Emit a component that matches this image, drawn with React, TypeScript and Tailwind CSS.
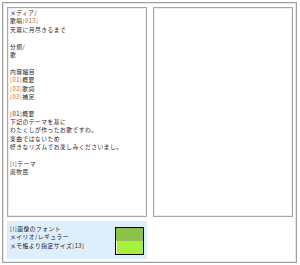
import React from "react";

const lines: { code?: string; text: string }[] = [
  { text: "メディア/" },
  { text: "歌唱", code: "[013]" },
  { text: "天幕に月尽きるまで" },
  { text: "" },
  { text: "分類/" },
  { text: "歌" },
  { text: "" },
  { text: "内容細目" },
  { code: "[01]", text: "概要" },
  { code: "[02]", text: "歌詞" },
  { code: "[03]", text: "補足" },
  { text: "" },
  { text: "[01]概要" },
  { text: "下記のテーマを基に" },
  { text: "わたくしが作ったお歌ですわ。" },
  { text: "楽曲ではないため" },
  { text: "好きなリズムでお楽しみくださいまし。" },
  { text: "" },
  { text: "[!]テーマ" },
  { text: "遊牧民" },
];

const font = { fontFamily: '"Noto Sans CJK JP", "Noto Sans", sans-serif' };

const App: React.FC = () => {
  return (
    <div className="w-[300px] h-[265px] bg-white pt-[2px] pl-[2px]" style={font}>
      <div className="w-[295px] h-[261px] border border-[#a0a0a0] shadow-[inset_0_0_0_1px_#e6e6e6] pt-[4px] pl-[4px] pr-[3px] pb-[3px] flex flex-col gap-[4px]">
        <div className="flex gap-[6px]">
          {/* memo text */}
          <div className="w-[140px] h-[210px] border border-[#a8a8a8] shadow-[inset_0_0_0_1px_#ececec] pl-[2px] pt-[1px] text-[5.75px] tracking-[0.5px] leading-[8.4px] text-[#222] whitespace-nowrap overflow-hidden">
            {lines.map((l, i) => (
              <div key={i} className="h-[8.4px]">
                {l.code && l.text !== "歌唱" ? <span className="text-[#b5651d]">{l.code}</span> : null}
                {l.text}
                {l.code && l.text === "歌唱" ? <span className="text-[#b5651d]">{l.code}</span> : null}
              </div>
            ))}
          </div>
          {/* empty preview */}
          <div className="w-[140px] h-[210px] border border-[#a8a8a8] shadow-[inset_0_0_0_1px_#ececec]" />
        </div>

        {/* font info */}
        <div className="w-[140px] h-[38px] bg-[#ddeefc] flex justify-between pl-[3px] pr-[3px]">
          <div className="pt-[4px] text-[5.75px] tracking-[0.5px] leading-[8.4px] text-[#222] whitespace-nowrap">
            <div>[!]画像のフォント</div>
            <div>メイリオ/レギュラー</div>
            <div>メモ帳より指定サイズ[13]</div>
          </div>
          <div className="mt-[6px] w-[29px] h-[28px] border border-black flex flex-col">
            <div className="h-[13px] bg-[#8bc34a]" />
            <div className="flex-1 flex">
              <div className="w-[1px] bg-white" />
              <div className="flex-1 bg-[#a5f03a]" />
            </div>
          </div>
        </div>
      </div>
    </div>
  );
};

export default App;
